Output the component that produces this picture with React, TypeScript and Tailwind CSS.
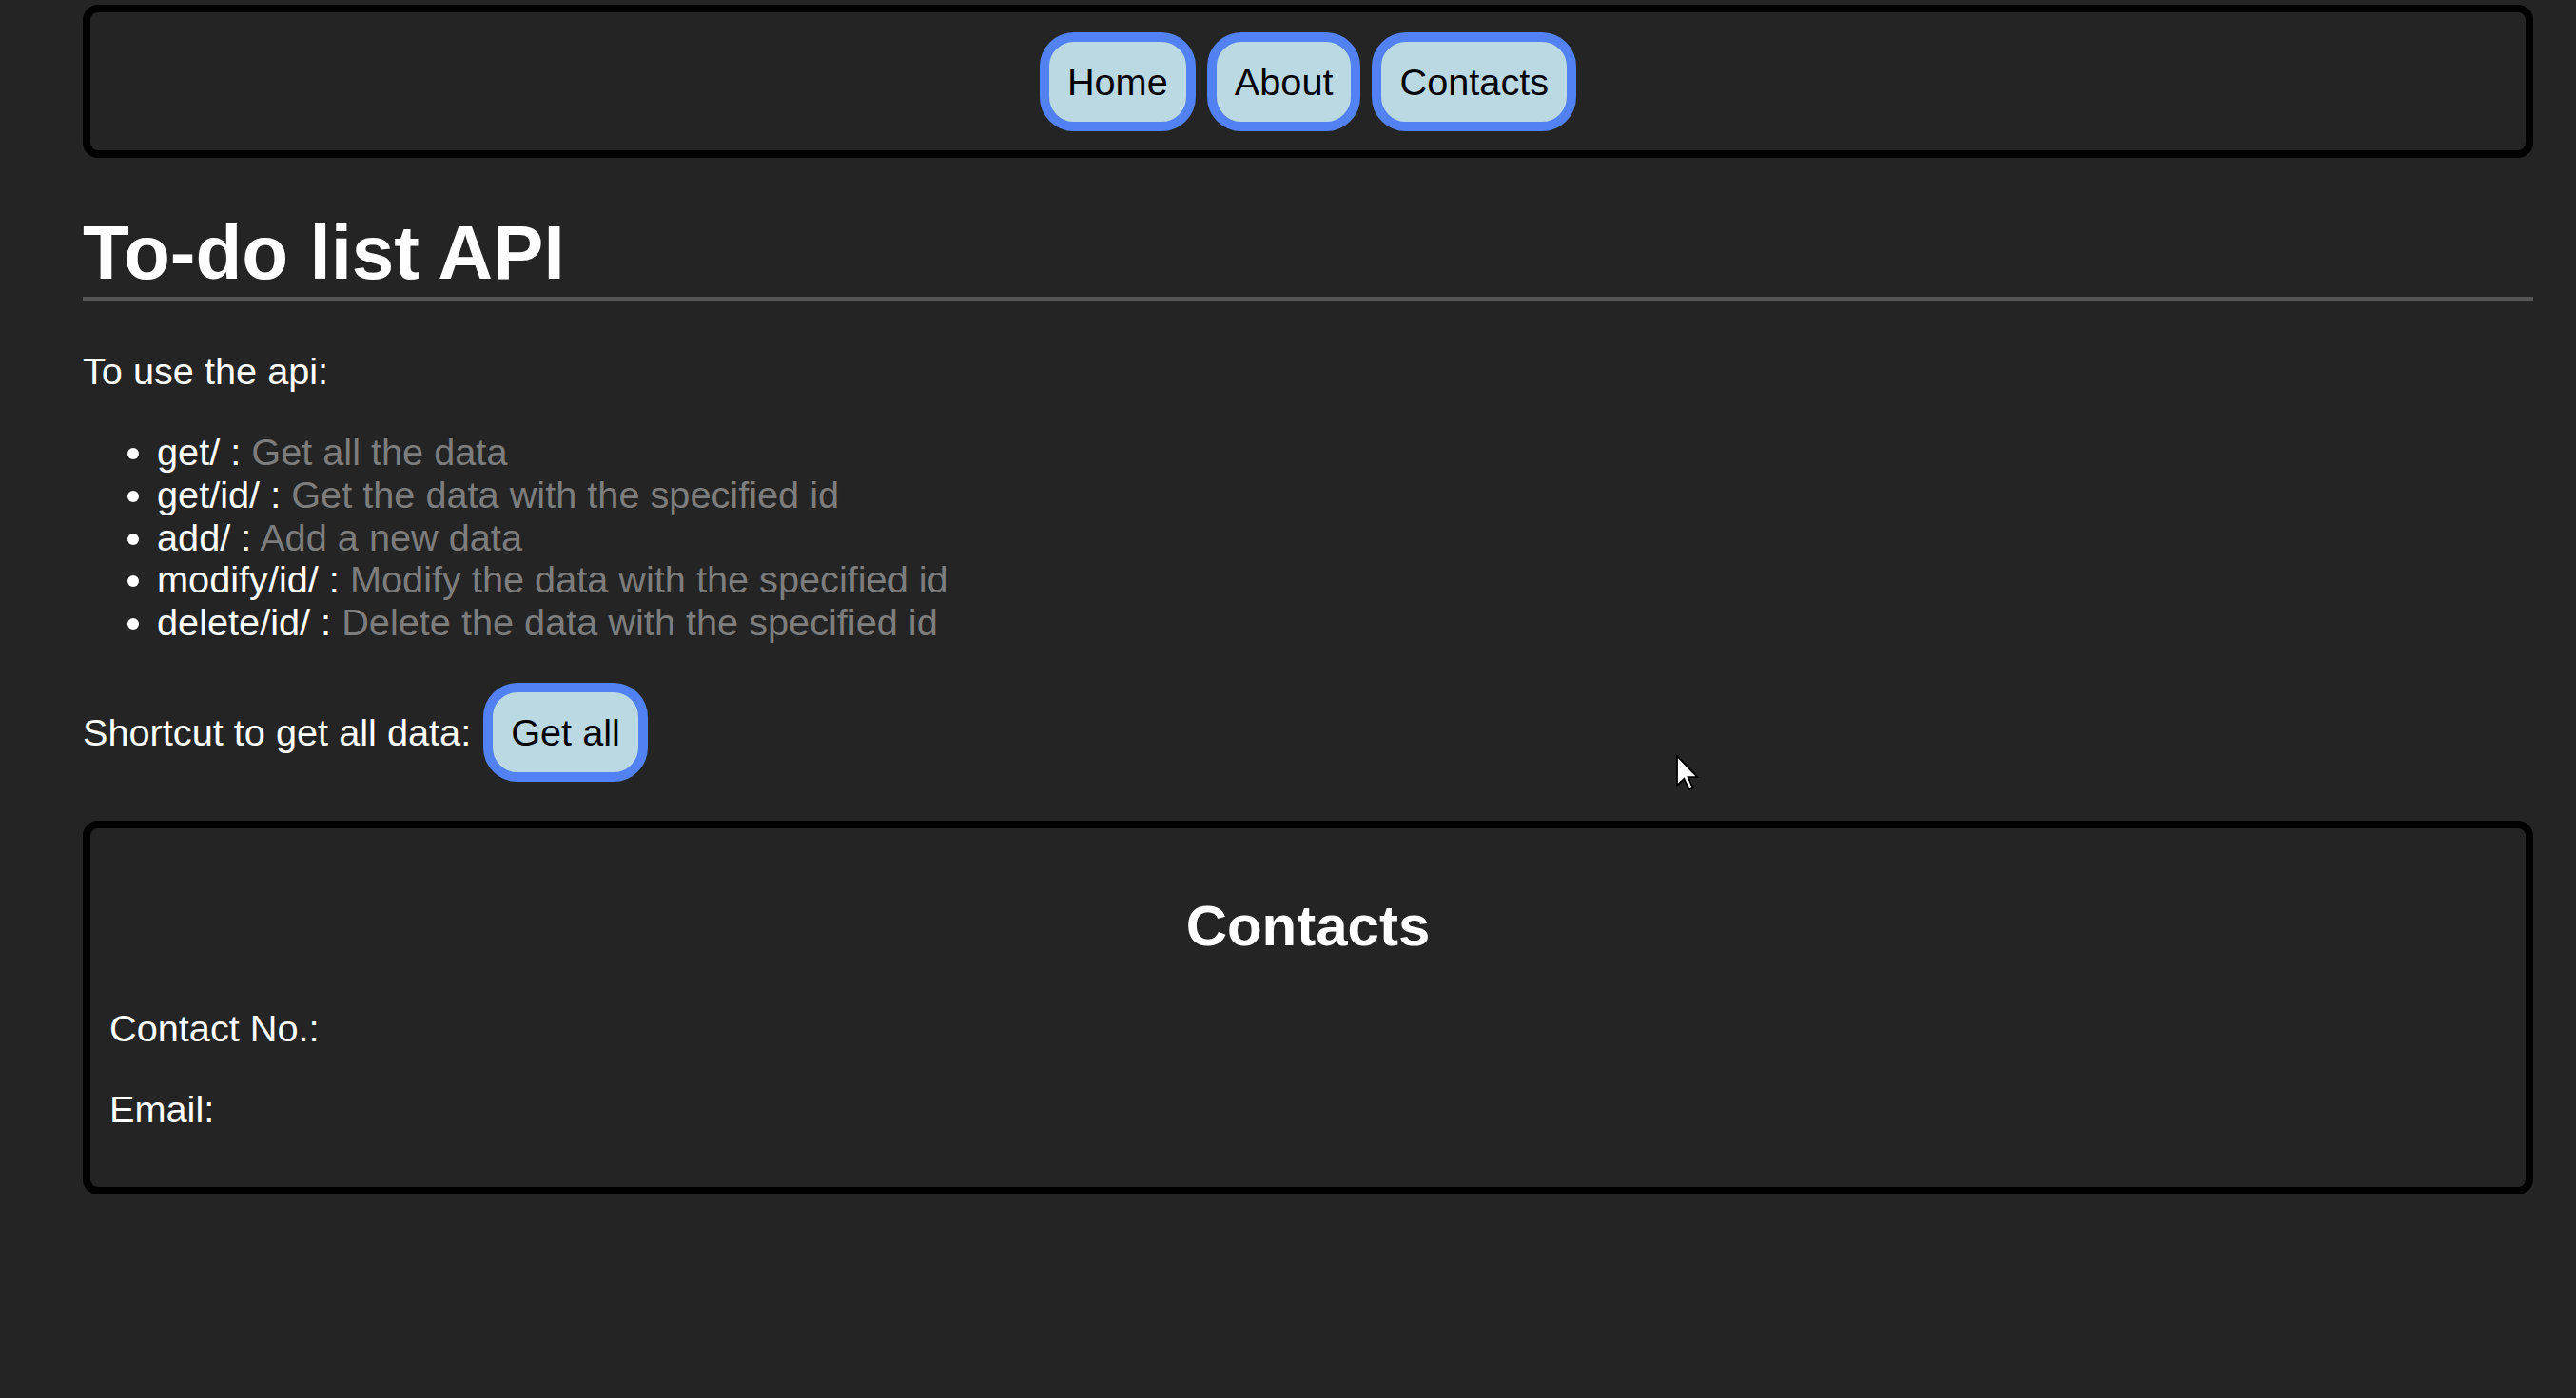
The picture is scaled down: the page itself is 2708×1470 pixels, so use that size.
import React from "react";

const ROUTES = [
  { path: "get/", desc: "Get all the data" },
  { path: "get/id/", desc: "Get the data with the specified id" },
  { path: "add/", desc: "Add a new data" },
  { path: "modify/id/", desc: "Modify the data with the specified id" },
  { path: "delete/id/", desc: "Delete the data with the specified id" },
];

const btn =
  "h-[104px] px-[19px] border-[10px] border-[#5181f2] bg-[#bbd9e3] rounded-[36px] text-black text-[39.7px] leading-[44px]";

export default function App() {
  return (
    <div className="relative min-h-screen bg-[#242424] text-white font-['Liberation_Sans',Arial,sans-serif] pt-[5px] pl-[87px] pr-[45px] pb-[200px]">
      {/* Nav */}
      <nav className="h-[161px] border-8 border-black rounded-[16px] flex items-center justify-center gap-[12px]">
        {["Home", "About", "Contacts"].map(l => (
          <button key={l} className={btn}>{l}</button>
        ))}
      </nav>

      <h1 className="mt-[56px] text-[80px] leading-[88px] font-bold pb-[2px] border-b-4 border-[#555555]">
        To-do list API
      </h1>

      <p className="mt-[52px] text-[39.7px] leading-[44px]">To use the api:</p>

      <ul className="mt-[41px] pl-[78px] list-disc text-[39.7px] leading-[44.8px]">
        {ROUTES.map(r => (
          <li key={r.path}>
            {r.path} : <span className="text-[#7d7d7d]">{r.desc}</span>
          </li>
        ))}
      </ul>

      <div className="mt-[41px] flex items-center gap-[13px] text-[39.7px] leading-[44px]">
        <span>Shortcut to get all data:</span>
        <button className={btn}>Get all</button>
      </div>

      {/* Contacts */}
      <div className="mt-[41px] border-8 border-black rounded-[16px] px-[20px] pt-[69px] pb-[60px]">
        <h2 className="text-center text-[60px] leading-[67px] font-bold">Contacts</h2>
        <p className="mt-[52px] text-[39.7px] leading-[44px]">Contact No.:</p>
        <p className="mt-[41px] text-[39.7px] leading-[44px]">Email:</p>
      </div>

      {/* mouse pointer */}
      <svg className="absolute left-[1762px] top-[794px]" width="24" height="38" viewBox="0 0 12 19">
        <path d="M0.5 0.5 L0.5 16 L4.2 12.4 L6.8 18.2 L8.8 17.3 L6.3 11.6 L11.2 11.6 Z" fill="#fff" stroke="#000" strokeWidth="0.9" strokeLinejoin="miter" />
      </svg>
    </div>
  );
}
